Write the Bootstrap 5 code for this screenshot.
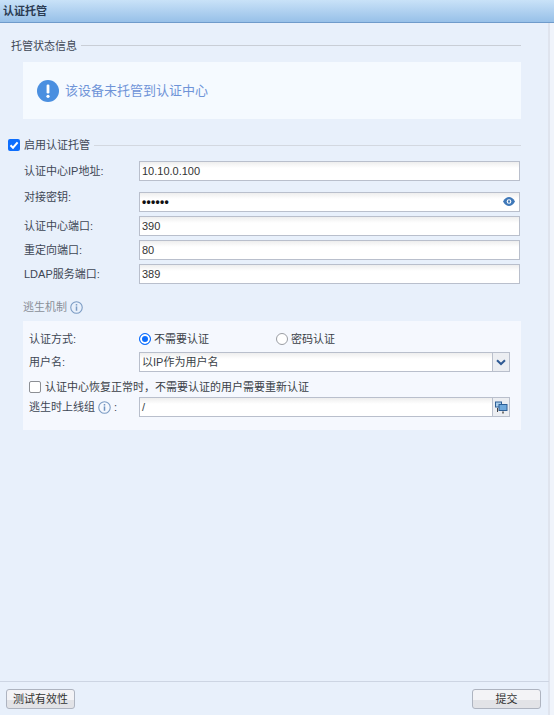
<!DOCTYPE html>
<html lang="zh">
<head>
<meta charset="utf-8">
<title>认证托管</title>
<link href="https://cdn.jsdelivr.net/npm/bootstrap@5.3.0/dist/css/bootstrap.min.css" rel="stylesheet">
<style>
html,body{height:100%;overflow:hidden}
body{background:#f0f4fb;color:#3a3f47;font:11px/16px "Liberation Sans","Noto Sans CJK SC",sans-serif}
.shell{width:550px;height:715px;background:#e8f0fb;border-right:2px solid #dfe4ee}
.title-bar{height:23px;width:554px;background:linear-gradient(#c9e2f8,#97c0e8);border-bottom:1px solid #6f9bcb;padding:3px 3px 0;color:#2b3b52;font-weight:700;flex:none}
.main-area{flex:1 1 auto;padding:14px 0 0 11px}
.legend-row{height:16px;width:510px;padding-top:1px}
.legend-row .rule{flex:1;height:1px;background:#c9ced6}
.legend-text{color:#3d4654}
.notice{width:498px;height:57px;margin:9px 0 18px 12px;background:#f5faff;padding-left:14px;color:#6f94d8;font-size:13px}
.notice-msg{margin-left:6px}
.check-row{margin-left:-3px;width:513px;height:16px}
.rule-line{height:1px;background:#d3d8e0}
.fake-check{width:12px;height:12px;border-radius:2px;flex:none;background:#0d6efd;display:flex;align-items:center;justify-content:center}
.fake-check.off{background:#fff;border:1px solid #8c8f94}
.form-stack{margin:8px 0 0 13px;width:496px}
.field-row{height:20px;margin-bottom:4px}
.field-row.pw{margin-top:11px;align-items:flex-start}
.field-label{width:115px;flex:none;color:#3d4654;line-height:20px}
.field-row.pw .field-label{margin-top:-5px}
.tb{flex:1;height:20px;background:linear-gradient(#eeeeee 0,#fff 6px);border:1px solid #b9bfcc;padding:0 2px;line-height:19px;color:#333;position:relative;min-width:0}
.eye{position:absolute;right:4px;top:4px}
.dots{font-size:12px;letter-spacing:.3px;color:#111;font-weight:700}
.escape-title{margin:15px 0 6px 12px;color:#8a8f98;height:16px}
.escape-box{width:498px;height:109px;margin-left:12px;background:#f5f8fe;padding:10px 11px 0 6px}
.escape-box .field-label{width:110px}
.radio-row{height:16px;margin-bottom:5px;line-height:16px}
.radio-row .field-label{line-height:16px}
.radio-a{width:137px}
.fake-radio{width:12px;height:12px;border-radius:50%;flex:none;margin-right:3px;background:#fff;border:1px solid #9a9da3}
.fake-radio.on{border:1px solid #0d6efd;box-shadow:inset 0 0 0 2px #fff;background:#0d6efd}
.combo{display:flex;flex:1;height:20px;border:1px solid #b9bfcc;min-width:0}
.combo .tb2{flex:1;background:linear-gradient(#eeeeee 0,#fff 6px);padding:0 2px;line-height:19px}
.combo .trig{width:17px;flex:none;background:#eceef2;border-left:1px solid #b9bfcc;display:flex;align-items:center;justify-content:center}
.restore{height:16px;margin:7px 0 2px 0}
.info{width:13px;height:13px;vertical-align:-3px}
.foot{flex:none;width:549px;height:34px;border-top:1px solid #cdd5e3;padding:7px 8px 0 6px}
.foot-btn{height:20px;padding:0;font-size:11px;line-height:18px;color:#333;border:1px solid #aeb4c0;border-radius:3px;background:linear-gradient(#f3f3f6 55%,#e2e3e7 55%)}
.b1{width:69px}
.b2{width:69px}
</style>
</head>
<body>
<div class="shell d-flex flex-column">
  <div class="title-bar">认证托管</div>
  <div class="main-area">
    <div class="legend-row d-flex align-items-center gap-1"><span class="legend-text">托管状态信息</span><span class="rule"></span></div>
    <div class="notice d-flex align-items-center">
      <svg width="22" height="22" viewBox="0 0 22 22" class="flex-shrink-0"><circle cx="11" cy="11" r="11" fill="#4a8fe0"/><rect x="9.6" y="4.5" width="2.8" height="9" rx="1.2" fill="#fff"/><circle cx="11" cy="16.3" r="1.6" fill="#fff"/></svg>
      <span class="notice-msg">该设备未托管到认证中心</span>
    </div>
    <div class="check-row d-flex align-items-center">
      <span class="fake-check"><svg width="10" height="10" viewBox="0 0 10 10"><path d="M1.5 5.2 4 7.7 8.6 2.4" fill="none" stroke="#fff" stroke-width="2"/></svg></span>
      <span class="legend-text ms-1">启用认证托管</span>
      <span class="rule-line flex-grow-1 ms-1"></span>
    </div>
    <div class="form-stack">
      <div class="d-flex field-row"><span class="field-label">认证中心IP地址:</span><div class="tb">10.10.0.100</div></div>
      <div class="d-flex field-row pw"><span class="field-label">对接密钥:</span><div class="tb"><span class="dots">••••••</span>
        <svg class="eye" width="12" height="9" viewBox="0 0 12 9"><path d="M0 4.5C2 1 4 0 6 0s4 1 6 4.5C10 8 8 9 6 9S2 8 0 4.5z" fill="#3f78b8"/><circle cx="6" cy="4.5" r="2.3" fill="#fff"/><circle cx="6" cy="4.5" r="1.2" fill="#3f78b8"/></svg></div></div>
      <div class="d-flex field-row"><span class="field-label">认证中心端口:</span><div class="tb">390</div></div>
      <div class="d-flex field-row"><span class="field-label">重定向端口:</span><div class="tb">80</div></div>
      <div class="d-flex field-row"><span class="field-label">LDAP服务端口:</span><div class="tb">389</div></div>
    </div>
    <div class="escape-title">逃生机制 <svg class="info" viewBox="0 0 12 12"><circle cx="6" cy="6" r="5.3" fill="none" stroke="#7c9cc4" stroke-width="1"/><rect x="5.3" y="5" width="1.4" height="4" fill="#7c9cc4"/><rect x="5.3" y="2.8" width="1.4" height="1.4" fill="#7c9cc4"/></svg></div>
    <div class="escape-box">
      <div class="d-flex radio-row">
        <span class="field-label">认证方式:</span>
        <span class="d-flex align-items-center radio-a"><span class="fake-radio on"></span>不需要认证</span>
        <span class="d-flex align-items-center"><span class="fake-radio"></span>密码认证</span>
      </div>
      <div class="d-flex field-row">
        <span class="field-label">用户名:</span>
        <div class="combo"><div class="tb2">以IP作为用户名</div><div class="trig"><svg width="10" height="7" viewBox="0 0 10 7"><path d="M1 1.2 5 5 9 1.2" fill="none" stroke="#2f5a93" stroke-width="2"/></svg></div></div>
      </div>
      <div class="d-flex align-items-center restore"><span class="fake-check off me-1"></span>认证中心恢复正常时，不需要认证的用户需要重新认证</div>
      <div class="d-flex field-row">
        <span class="field-label">逃生时上线组 <svg class="info" viewBox="0 0 12 12"><circle cx="6" cy="6" r="5.3" fill="none" stroke="#7c9cc4" stroke-width="1"/><rect x="5.3" y="5" width="1.4" height="4" fill="#6f93c0"/><rect x="5.3" y="2.8" width="1.4" height="1.4" fill="#6f93c0"/></svg> :</span>
        <div class="combo"><div class="tb2">/</div><div class="trig"><svg width="13" height="13" viewBox="0 0 13 13"><rect x="0.5" y="1" width="6" height="5" fill="#a9cdea" stroke="#2e5f96"/><rect x="4" y="3.5" width="8" height="6" fill="#6fa9dc" stroke="#2e5f96"/><rect x="2" y="7" width="1" height="4" fill="#444"/><rect x="7" y="10.5" width="2" height="2" fill="#777"/></svg></div></div>
      </div>
    </div>
  </div>
  <div class="foot d-flex justify-content-between">
    <button class="foot-btn b1" type="button">测试有效性</button>
    <button class="foot-btn b2" type="button">提交</button>
  </div>
</div>
<script src="https://cdn.jsdelivr.net/npm/bootstrap@5.3.0/dist/js/bootstrap.bundle.min.js"></script>
</body>
</html>
